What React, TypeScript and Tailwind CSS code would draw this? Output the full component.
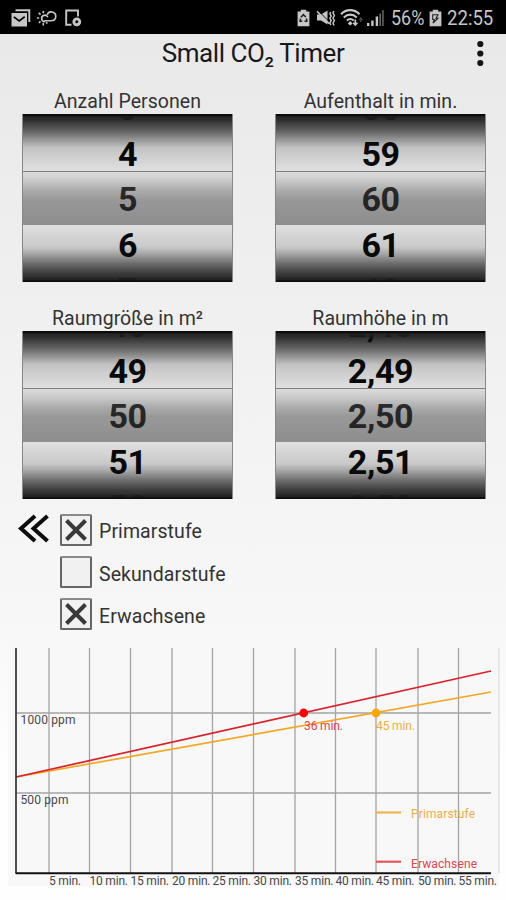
import { useState } from "react";

interface Wheel {
  label: string;
  values: string[];
}

const topWheels: Wheel[] = [
  { label: "Anzahl Personen", values: ["3", "4", "5", "6", "7"] },
  { label: "Aufenthalt in min.", values: ["58", "59", "60", "61", "62"] },
];

const bottomWheels: Wheel[] = [
  { label: "Raumgröße in m²", values: ["48", "49", "50", "51", "52"] },
  { label: "Raumhöhe in m", values: ["2,48", "2,49", "2,50", "2,51", "2,52"] },
];

const ticks = [
  { x: 49, label: "5 min." },
  { x: 89.5, label: "10 min." },
  { x: 130.5, label: "15 min." },
  { x: 172, label: "20 min." },
  { x: 212.5, label: "25 min." },
  { x: 253.5, label: "30 min." },
  { x: 295, label: "35 min." },
  { x: 335.5, label: "40 min." },
  { x: 376, label: "45 min." },
  { x: 418, label: "50 min." },
  { x: 458.5, label: "55 min." },
];

function StatusBar() {
  return (
    <div className="flex h-[34px] items-center bg-black pt-0.5 pl-[11px] text-[#c6c6c6]">
      <svg width="20" height="18" viewBox="0 0 20 18" fill="none">
        <path d="M4.5 1.2H18.3V13" stroke="currentColor" strokeWidth="1.9" />
        <rect x="0.5" y="4" width="15.5" height="13.5" fill="currentColor" />
        <path d="M2.8 7.8L8.2 12L13.7 7.8" stroke="#000" strokeWidth="1.7" />
      </svg>
      <svg className="ml-1.5" width="20" height="18" viewBox="0 0 20 18" fill="none" stroke="currentColor" strokeWidth="1.6">
        <path d="M7.2 11.7H14.3A4.4 4.4 0 1 0 10.2 5.8" />
        <path d="M10.8 8.2A3.2 3.2 0 1 0 8.2 12.6" />
        <path d="M6.3 2V4.2M1.8 3.9L3.5 5.6M0 9H2.2M1.8 14L3.5 12.4M6.3 14V16.4M10.4 14.6L9.2 13.2" />
      </svg>
      <svg className="ml-2" width="18" height="18" viewBox="0 0 18 18" fill="none">
        <path d="M6.5 15.8H1.2V1.5H13V7.5" stroke="currentColor" strokeWidth="1.9" />
        <circle cx="11.8" cy="12.8" r="2.9" stroke="currentColor" strokeWidth="3" />
        <path d="M10.9 11.2L13.6 12.8L10.9 14.4Z" fill="#000" />
      </svg>
      <svg className="ml-[214px]" width="13" height="18" viewBox="0 0 13 18" fill="none">
        <path d="M3.8 0.8H9.2V2.6H12.4V17.3H0.6V2.6H3.8Z" fill="currentColor" />
        <path d="M3.9 8.3L6.4 5.6L8.8 8M9.5 9.5L9.8 12.3H7.5M5.3 12.3H3.2L3.5 9.7" stroke="#222" strokeWidth="1.6" />
      </svg>
      <svg className="ml-1.5" width="20" height="18" viewBox="0 0 20 18" fill="none">
        <path d="M1 5.5H5L11.5 1.5V15.5L5 11.5H1Z" fill="currentColor" />
        <path d="M2 1.5L14 13.5" stroke="#000" strokeWidth="1" />
        <path d="M1 2.2L13.3 14.8" stroke="currentColor" strokeWidth="1.6" />
        <path d="M14.8 3L13.9 5L15.2 7L13.9 9.3L15.2 11.5L13.9 13.7L14.8 16M18 2L17 4L18.4 6.5L17 9L18.4 11.5L17 14L18 16.5" stroke="currentColor" strokeWidth="1.5" />
      </svg>
      <svg className="ml-1" width="24" height="18" viewBox="0 0 24 18" fill="none" stroke="currentColor">
        <path d="M1 5.2C6.2 -0.2 14.3 -0.2 19.5 5.2M3.8 8.4C7.6 4.7 12.9 4.7 16.7 8.4M6.8 11.5C9 9.6 11.5 9.6 13.7 11.5" strokeWidth="2.1" />
        <path d="M10.2 12L12.6 14.4L10.2 16.5L7.8 14.4Z" fill="currentColor" stroke="none" />
        <path d="M15.3 10.5V16.3M13.2 13.8L15.3 16.1L17.4 13.8" strokeWidth="1.7" />
        <path d="M20.8 13V8.2M18.9 10.6H22.7" stroke="#444" strokeWidth="1.5" />
      </svg>
      <svg className="ml-[3px]" width="17" height="18" viewBox="0 0 17 18">
        <path d="M0 14H2.4V17H0ZM4.2 11.5H6.6V17H4.2ZM8.7 7.5H11.1V17H8.7Z" fill="currentColor" />
        <path d="M12.4 4.5H14V17H12.4ZM15.2 1H16.7V17H15.2Z" fill="#666" />
      </svg>
      <span className="ml-[7px] inline-block w-[37px] origin-left scale-x-[0.92] pt-0.5 text-[19.5px] leading-none">
        56%
      </span>
      <svg className="ml-px" width="13" height="18" viewBox="0 0 13 18" fill="none">
        <path d="M3.8 0.8H9.2V2.6H12.4V17.3H0.6V2.6H3.8Z" fill="currentColor" />
        <path d="M3.7 5.7H9L7 9.2H9L4 14L5.3 10.5H3.7Z" stroke="#222" strokeWidth="1.1" />
      </svg>
      <span className="ml-[5px] inline-block origin-left scale-x-[0.93] text-[20px] leading-none">
        22:55
      </span>
    </div>
  );
}

function Picker({ wheel }: { wheel: Wheel }) {
  return (
    <div className="flex w-[211px] flex-col">
      <div className="flex h-[26px] items-center justify-center pt-[2px] text-[19.5px] tracking-[0.05px] whitespace-nowrap text-[#333]">
        {wheel.label}
      </div>
      <div className="relative flex h-[168px] flex-col items-center justify-center overflow-hidden border-x border-[#888] bg-[linear-gradient(#222_0%,#333_4%,#606060_10%,#9c9c9c_16%,#c2c2c2_20%,#cccccc_24%,#e0e0e0_34%,#e0e0e0_66%,#c9c9c9_79%,#a8a8a8_83%,#6c6c6c_89%,#3a3a3a_95%,#222_100%)]">
        {wheel.values.map((value, i) => (
          <div
            key={value}
            className={`flex h-[45.5px] shrink-0 translate-y-[1px] items-center text-[34px] leading-none font-bold tracking-[-0.4px] ${
              i === 2 ? "text-[#363636]" : "text-[#090909]"
            }`}
          >
            {value}
          </div>
        ))}
        <div className="absolute inset-x-0 top-[57px] h-[54px] border-t border-[#808080] bg-[linear-gradient(rgba(0,0,0,0.02)_0%,rgba(0,0,0,0.1)_16%,rgba(0,0,0,0.23)_34%,rgba(0,0,0,0.32)_52%,rgba(0,0,0,0.37)_100%)]" />
        <div className="absolute inset-x-0 top-0 h-[8px] bg-[linear-gradient(#0c0c0c_20%,rgba(38,38,38,0.8)_35%,rgba(48,48,48,0.2))]" />
        <div className="absolute inset-x-0 bottom-0 h-[5px] bg-[linear-gradient(rgba(40,40,40,0.6),rgba(32,32,32,0.8)_60%,#0c0c0c_75%)]" />
      </div>
    </div>
  );
}

function CheckRow({ label, initial }: { label: string; initial: boolean }) {
  const [checked, setChecked] = useState(initial);

  return (
    <button
      type="button"
      role="checkbox"
      aria-checked={checked}
      onClick={() => setChecked(!checked)}
      className="flex h-[42.2px] items-center gap-[7px]"
    >
      <span className="flex size-[32px] items-center justify-center rounded-xs border-2 border-[#666] border-t-[#8a8a8a] bg-[#f1f1f1]">
        {checked && (
          <svg width="22" height="22" viewBox="0 0 22 22" stroke="#383838" strokeWidth="4">
            <path d="M1.5 1.5L20.5 20.5M20.5 1.5L1.5 20.5" />
          </svg>
        )}
      </span>
      <span className="pt-1 text-[19.5px] tracking-[0.08px] text-[#333]">{label}</span>
    </button>
  );
}

function Chart() {
  return (
    <svg width="506" height="256" viewBox="0 644 506 256" className="block text-[12px]">
      <rect x="8" y="644" width="491" height="242" fill="#f8f8f8" />
      {ticks.map((tick) => (
        <g key={tick.label}>
          <line x1={tick.x} x2={tick.x} y1="648" y2="873" stroke="#a4a4a4" strokeWidth="1.3" />
          <text x={tick.x} y="885" fill="#484848" textLength={tick.label.length > 6 ? 38.5 : 32}>
            {tick.label}
          </text>
        </g>
      ))}
      <line x1="499" x2="499" y1="648" y2="873" stroke="#e0e0e0" strokeWidth="1.5" />
      <line x1="16" x2="491" y1="713" y2="713" stroke="#a4a4a4" strokeWidth="1.3" />
      <line x1="16" x2="491" y1="793" y2="793" stroke="#a4a4a4" strokeWidth="1.3" />
      <text x="20.5" y="724" fill="#484848" textLength="55">1000 ppm</text>
      <text x="20.5" y="804" fill="#484848" textLength="48">500 ppm</text>

      <line x1="16" x2="491" y1="777" y2="692" stroke="#f5a623" strokeWidth="1.7" />
      <line x1="16" x2="491" y1="777" y2="671" stroke="#dc2028" strokeWidth="1.7" />
      <circle cx="303.7" cy="713" r="4.4" fill="#fe0000" />
      <circle cx="376" cy="713" r="4.4" fill="#ffa500" />
      <text x="304" y="730" fill="#e0454d" textLength="39">36 min.</text>
      <text x="376" y="730" fill="#f0ae42" textLength="39">45 min.</text>

      <line x1="376" x2="401" y1="812.5" y2="812.5" stroke="#f1b450" strokeWidth="2.2" />
      <text x="411" y="818" fill="#f0ae42" textLength="64">Primarstufe</text>
      <line x1="376" x2="401" y1="861.7" y2="861.7" stroke="#e2565c" strokeWidth="2.2" />
      <text x="411" y="867.5" fill="#e0454d" textLength="66">Erwachsene</text>

      <path d="M16 648V873" stroke="#333" strokeWidth="1.7" />
      <path d="M15.5 873.2H491" stroke="#111" strokeWidth="2" />
    </svg>
  );
}

export default function App() {
  return (
    <div className="flex h-[900px] w-[506px] flex-col overflow-hidden bg-[linear-gradient(#e8e8e8_0%,#f0f0f0_35%,#f7f7f7_68%,#fefefe_85%)] font-['Roboto','Liberation_Sans',sans-serif]">
      <StatusBar />

      <header className="grid h-[54px] grid-cols-[1fr_auto_1fr] items-start">
        <div />
        <h1 className="pt-[1px] text-[26px] leading-9 tracking-[-0.43px] whitespace-nowrap text-[#191919]">
          Small CO₂ Timer
        </h1>
        <button type="button" aria-label="Menü" className="mt-[6px] mr-[20px] justify-self-end">
          <svg width="12" height="26" viewBox="0 0 12 26" fill="#151515">
            <circle cx="6.3" cy="4" r="3.1" />
            <circle cx="6.3" cy="13.5" r="3.1" />
            <circle cx="6.3" cy="23" r="3.1" />
          </svg>
        </button>
      </header>

      <div className="flex gap-[42px] pl-[22px]">
        {topWheels.map((wheel) => (
          <Picker key={wheel.label} wheel={wheel} />
        ))}
      </div>
      <div className="mt-[23px] flex gap-[42px] pl-[22px]">
        {bottomWheels.map((wheel) => (
          <Picker key={wheel.label} wheel={wheel} />
        ))}
      </div>

      <div className="flex grow gap-[11px] pt-[10px] pl-[17px]">
        <svg className="mt-[5px]" width="32" height="30" viewBox="0 0 32 30" fill="none" stroke="#0d0d0d" strokeWidth="4">
          <path d="M18 2L4 14.5L18 27M30.5 2L16.5 14.5L30.5 27" />
        </svg>
        <div className="flex flex-col">
          <CheckRow label="Primarstufe" initial={true} />
          <CheckRow label="Sekundarstufe" initial={false} />
          <CheckRow label="Erwachsene" initial={true} />
        </div>
      </div>

      <Chart />
    </div>
  );
}
